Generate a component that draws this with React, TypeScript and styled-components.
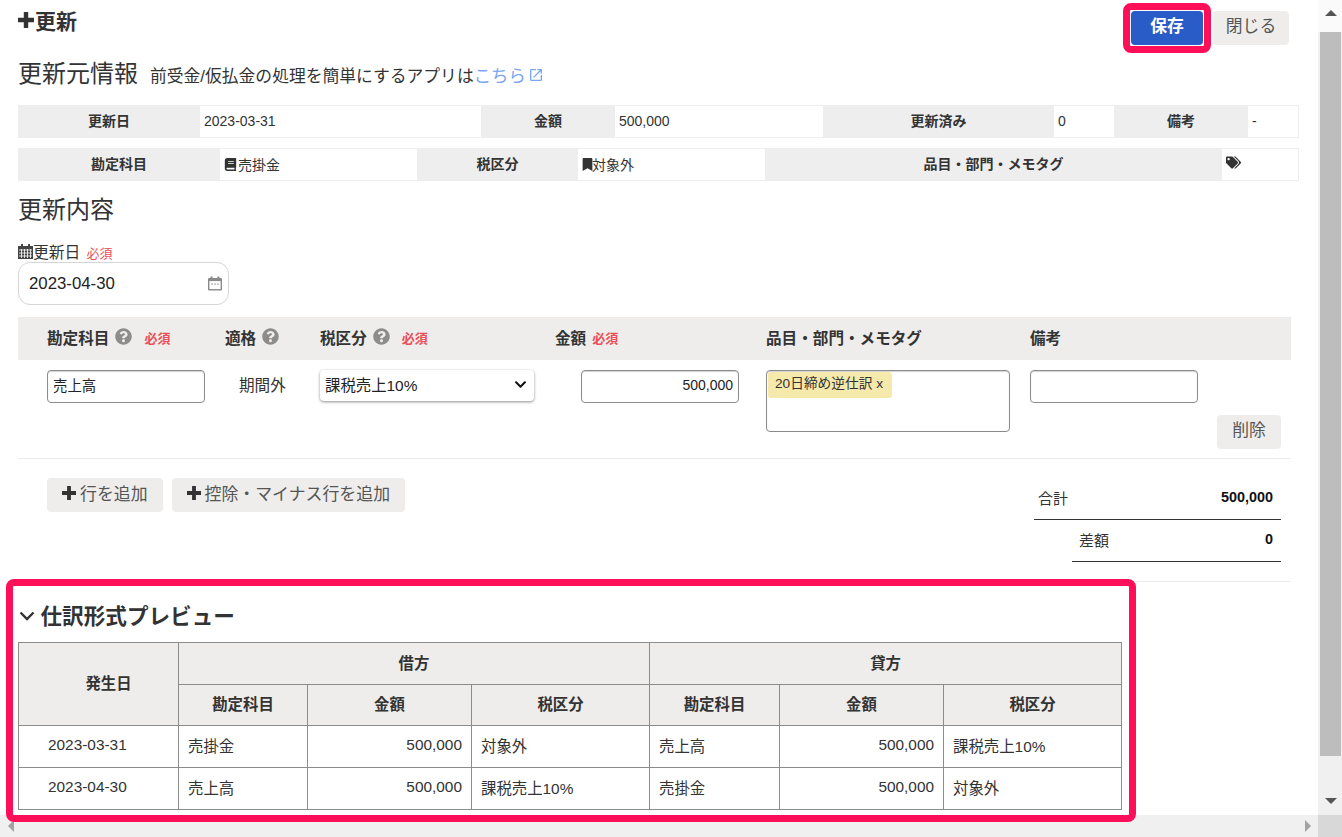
import * as React from "react";
import styled, { createGlobalStyle } from "styled-components";
import {
  FaBook,
  FaBookmark,
  FaChevronDown,
  FaQuestionCircle,
  FaTags,
} from "react-icons/fa";
import { MdOpenInNew } from "react-icons/md";

const GlobalStyle = createGlobalStyle`
  html, body {
    margin: 0;
    padding: 0;
    overflow: hidden;
  }
  * {
    box-sizing: border-box;
  }
  body {
    font-family: "Liberation Sans", "Noto Sans CJK JP", sans-serif;
    color: #333;
    background: #fff;
  }
`;

const pink = "#ff0f5a";
const border = "#8c8c8c";

const infoTop = [
  { label: "更新日", value: "2023-03-31" },
  { label: "金額", value: "500,000" },
  { label: "更新済み", value: "0" },
  { label: "備考", value: "-" },
];

const previewRows = [
  ["2023-03-31", "売掛金", "500,000", "対象外", "売上高", "500,000", "課税売上10%"],
  ["2023-04-30", "売上高", "500,000", "課税売上10%", "売掛金", "500,000", "対象外"],
];

const PlusIcon: React.FC<{ size: number }> = ({ size }) => (
  <PlusSvg viewBox="0 0 16 16" width={size} height={size}>
    <path d="M5.8 0h4.4v5.8H16v4.4h-5.8V16H5.8v-5.8H0V5.8h5.8z" fill="currentColor" />
  </PlusSvg>
);

const App: React.FC = () => {
  return (
    <>
      <GlobalStyle />
      <Screen>
        <Page>
          <Main>
            <TopBar>
              <Title>
                <PlusIcon size={16} />
                更新
              </Title>
              <TopActions>
                <SaveButton>保存</SaveButton>
                <GreyButton>閉じる</GreyButton>
              </TopActions>
            </TopBar>

            <SourceHeading>
              <SectionTitle>更新元情報</SectionTitle>
              <Promo>
                前受金/仮払金の処理を簡単にするアプリは
                <PromoLink>
                  こちら
                  <MdOpenInNew size={16} />
                </PromoLink>
              </Promo>
            </SourceHeading>

            <InfoTable>
              <colgroup>
                <col width={181} />
                <col width={282} />
                <col width={133} />
                <col width={209} />
                <col width={230} />
                <col width={61} />
                <col width={133} />
                <col width={51} />
              </colgroup>
              <tbody>
                <tr>
                  {infoTop.map((item) => (
                    <React.Fragment key={item.label}>
                      <InfoLabel>{item.label}</InfoLabel>
                      <InfoValue>{item.value}</InfoValue>
                    </React.Fragment>
                  ))}
                </tr>
              </tbody>
            </InfoTable>

            <InfoTable>
              <colgroup>
                <col width={201} />
                <col width={198} />
                <col width={160} />
                <col width={188} />
                <col width={456} />
                <col width={77} />
              </colgroup>
              <tbody>
                <tr>
                  <InfoLabel>勘定科目</InfoLabel>
                  <InfoValue>
                    <BookIcon />
                    売掛金
                  </InfoValue>
                  <InfoLabel>税区分</InfoLabel>
                  <InfoValue>
                    <BookmarkIcon />
                    対象外
                  </InfoValue>
                  <InfoLabel>品目・部門・メモタグ</InfoLabel>
                  <InfoValue>
                    <FaTags size={15} />
                  </InfoValue>
                </tr>
              </tbody>
            </InfoTable>

            <ContentHeading>更新内容</ContentHeading>

            <DateLabel>
              <CalendarSvg viewBox="0 0 15 15" width="15" height="15">
                <path d="M3 0h2v2h5V0h2v2h3v13H0V2h3z" fill="#444" />
                <path
                  d="M1 6h13M1 9h13M1 12h13M3.5 5v9M6.5 5v9M9.5 5v9M12.5 5v9"
                  stroke="#fff"
                  strokeWidth="0.8"
                  fill="none"
                />
              </CalendarSvg>
              更新日
              <Required>必須</Required>
            </DateLabel>
            <DateField>
              2023-04-30
              <DateFieldIcon viewBox="0 0 16 16" width="16" height="17">
                <path
                  d="M3.5 1h2v1.5h5V1h2v1.5H14a1 1 0 0 1 1 1V14a1 1 0 0 1-1 1H2a1 1 0 0 1-1-1V3.5a1 1 0 0 1 1-1h1.5z"
                  fill="#8a8a8a"
                />
                <rect x="2.4" y="5.6" width="11.2" height="8" fill="#fff" />
                <rect x="4.4" y="8" width="1.4" height="1.2" fill="#8a8a8a" />
                <rect x="7.3" y="8" width="1.4" height="1.2" fill="#8a8a8a" />
                <rect x="10.2" y="8" width="1.4" height="1.2" fill="#8a8a8a" />
              </DateFieldIcon>
            </DateField>

            <LineHeader>
              <HeaderCell>
                勘定科目
                <HelpIcon />
                <HeaderRequired>必須</HeaderRequired>
              </HeaderCell>
              <HeaderCell>
                適格
                <HelpIcon />
              </HeaderCell>
              <HeaderCell>
                税区分
                <HelpIcon />
                <HeaderRequired>必須</HeaderRequired>
              </HeaderCell>
              <HeaderCell>
                金額
                <AmountRequired>必須</AmountRequired>
              </HeaderCell>
              <HeaderCell>品目・部門・メモタグ</HeaderCell>
              <HeaderCell>備考</HeaderCell>
            </LineHeader>

            <LineRow>
              <AccountCell>
                <TextBox $width={158}>売上高</TextBox>
              </AccountCell>
              <Qualified>期間外</Qualified>
              <SelectBox>
                課税売上10%
                <FaChevronDown size={13} color="#111" />
              </SelectBox>
              <AmountCell>
                <TextBox $width={158} $right>
                  500,000
                </TextBox>
              </AmountCell>
              <TagBox>
                <Tag>20日締め逆仕訳 x</Tag>
              </TagBox>
              <MemoCell>
                <TextBox $width={168} />
                <DeleteButton>削除</DeleteButton>
              </MemoCell>
            </LineRow>

            <FooterRow>
              <AddButtons>
                <AddButton>
                  <PlusIcon size={14} />
                  行を追加
                </AddButton>
                <AddButton>
                  <PlusIcon size={14} />
                  控除・マイナス行を追加
                </AddButton>
              </AddButtons>
              <Totals>
                <TotalRow>
                  <span>合計</span>
                  <TotalValue>500,000</TotalValue>
                </TotalRow>
                <TotalRow $short>
                  <span>差額</span>
                  <TotalValue>0</TotalValue>
                </TotalRow>
              </Totals>
            </FooterRow>

            <PreviewHeading>
              <ChevronSvg viewBox="0 0 16 10" width="16" height="10">
                <polyline points="1.5,1.5 8,8 14.5,1.5" fill="none" stroke="currentColor" strokeWidth="2.4" />
              </ChevronSvg>
              仕訳形式プレビュー
            </PreviewHeading>

            <PreviewTable>
              <colgroup>
                <col width={160} />
                <col width={129} />
                <col width={164} />
                <col width={178} />
                <col width={130} />
                <col width={164} />
                <col width={178} />
              </colgroup>
              <thead>
                <tr>
                  <DateHead rowSpan={2}>発生日</DateHead>
                  <PreviewHead colSpan={3}>借方</PreviewHead>
                  <PreviewHead colSpan={3}>貸方</PreviewHead>
                </tr>
                <tr>
                  <PreviewHead>勘定科目</PreviewHead>
                  <PreviewHead>金額</PreviewHead>
                  <PreviewHead>税区分</PreviewHead>
                  <PreviewHead>勘定科目</PreviewHead>
                  <PreviewHead>金額</PreviewHead>
                  <PreviewHead>税区分</PreviewHead>
                </tr>
              </thead>
              <tbody>
                {previewRows.map((row) => (
                  <tr key={row[0]}>
                    {row.map((cell, i) => (
                      <PreviewCell key={i} $kind={i === 0 ? "date" : i === 2 || i === 5 ? "num" : "text"}>
                        {cell}
                      </PreviewCell>
                    ))}
                  </tr>
                ))}
              </tbody>
            </PreviewTable>
          </Main>

          <HorizontalBar>
            <ArrowLeft />
            <ArrowRight />
          </HorizontalBar>
        </Page>

        <VerticalBar>
          <ArrowButton>
            <ArrowUp />
          </ArrowButton>
          <Thumb />
          <ArrowSpacer>
            <ArrowDown />
          </ArrowSpacer>
          <Corner />
        </VerticalBar>

        <SaveHighlight />
        <PreviewHighlight />
      </Screen>
    </>
  );
};

export default App;

const Screen = styled.div`
  position: relative;
  display: flex;
  width: 1342px;
  height: 837px;
  overflow: hidden;
`;

const Page = styled.div`
  display: flex;
  flex-direction: column;
  width: 1318px;
  height: 837px;
`;

const Main = styled.main`
  flex: 1;
  min-height: 0;
  padding-left: 18px;
  overflow: hidden;
`;

const PlusSvg = styled.svg`
  flex: none;
  color: #333;
`;

const ChevronSvg = styled.svg`
  flex: none;
  margin: 4px 0 0 0.5px;
`;

const CalendarSvg = styled.svg`
  flex: none;
`;

const BookIcon = styled(FaBook)`
  width: 13px;
  height: 13px;
  margin-right: 1px;
`;

const BookmarkIcon = styled(FaBookmark)`
  width: 13px;
  height: 13px;
  margin: 0 -2px 0 -1px;
`;

const TopBar = styled.div`
  display: flex;
  justify-content: space-between;
  align-items: flex-start;
  width: 1271px;
  padding-top: 11px;
`;

const Title = styled.h1`
  display: flex;
  align-items: center;
  gap: 1px;
  margin: 0;
  height: 22px;
  padding-bottom: 4px;
  font-size: 21px;
  font-weight: 700;
  color: #333;
`;

const TopActions = styled.div`
  display: flex;
  gap: 10px;
`;

const BaseButton = styled.button`
  display: inline-flex;
  justify-content: center;
  align-items: center;
  height: 34px;
  padding: 0 0 6px;
  border: none;
  border-radius: 4px;
  font-family: inherit;
  font-size: 16.8px;
  color: #555;
`;

const SaveButton = styled(BaseButton)`
  width: 72px;
  background: #2a5cc8;
  color: #fff;
  font-weight: 700;
`;

const GreyButton = styled(BaseButton)`
  width: 76px;
  background: #eeedeb;
`;

const SourceHeading = styled.div`
  display: flex;
  align-items: center;
  gap: 12px;
  height: 28px;
  margin-top: 15px;
  margin-bottom: 17px;
`;

const SectionTitle = styled.h2`
  margin: 0;
  font-size: 24px;
  font-weight: 400;
  line-height: 28px;
  color: #333;
`;

const Promo = styled.span`
  font-size: 16.8px;
`;

const PromoLink = styled.a`
  display: inline-flex;
  align-items: center;
  gap: 2px;
  color: #7aa6f2;
  font-size: 17.4px;

  svg {
    margin-top: 2px;
  }
`;

const InfoTable = styled.table`
  width: 1280px;
  height: 33px;
  margin-bottom: 10px;
  border-collapse: collapse;
  table-layout: fixed;
  font-size: 14px;
`;

const InfoLabel = styled.th`
  height: 32px;
  padding: 0 0 3px;
  background: #eeeeee;
  border: 1px solid #eeeeee;
  font-weight: 700;
  color: #333;
`;

const InfoValue = styled.td`
  padding: 0 4px 2px;
  border: 1px solid #eeeeee;
  color: #333;

  svg {
    vertical-align: -1px;
  }
`;

const ContentHeading = styled(SectionTitle)`
  margin-top: 15px;
  margin-bottom: 18px;
`;

const DateLabel = styled.div`
  display: flex;
  align-items: center;
  height: 18px;
  font-size: 15.8px;
`;

const Required = styled.span`
  margin-left: 6px;
  margin-top: 2px;
  color: #e8505b;
  font-size: 13px;
`;

const DateField = styled.div`
  display: flex;
  justify-content: space-between;
  align-items: center;
  width: 211px;
  height: 43px;
  margin-top: 2px;
  padding: 0 5px 0 10px;
  background: #fff;
  border: 1px solid #d5d5d5;
  border-radius: 12px;
  font-size: 16.8px;
  color: #222;
`;

const DateFieldIcon = styled.svg`
  flex: none;
`;

const lineColumns = "207px 95px 235px 211px 264px 261px";

const LineHeader = styled.div`
  display: grid;
  grid-template-columns: ${lineColumns};
  align-items: center;
  width: 1273px;
  height: 43px;
  margin-top: 12px;
  padding-bottom: 4px;
  background: #eeedeb;
`;

const HeaderCell = styled.div`
  display: flex;
  align-items: center;
  font-size: 15.6px;
  font-weight: 700;
  color: #333;

  &:first-child {
    padding-left: 29px;
  }
`;

const HelpIcon = styled(FaQuestionCircle)`
  width: 17px;
  height: 17px;
  margin-left: 6px;
  color: #8c8c8c;
`;

const HeaderRequired = styled(Required)`
  margin-left: 12px;
  font-weight: 700;
`;

const AmountRequired = styled(Required)`
  margin-left: 6px;
  font-weight: 700;
`;

const LineRow = styled.div`
  display: grid;
  grid-template-columns: ${lineColumns};
  align-items: start;
  width: 1273px;
  height: 99px;
  padding-top: 10px;
  border-bottom: 1px solid #ebebeb;
`;

const AccountCell = styled.div`
  padding-left: 29px;
`;

const TextBox = styled.div<{ $width: number; $right?: boolean }>`
  display: flex;
  align-items: center;
  justify-content: ${(p) => (p.$right ? "flex-end" : "flex-start")};
  width: ${(p) => p.$width}px;
  height: 33px;
  padding: 0 5px 4px;
  background: #fff;
  border: 1px solid #8c8c8c;
  border-radius: 4px;
  box-shadow: inset 0 1px 1px rgba(0, 0, 0, 0.18);
  font-size: ${(p) => (p.$right ? "14px" : "14.4px")};
  color: #222;
`;

const Qualified = styled.div`
  padding: 3px 0 0 14px;
  font-size: 15.6px;
  color: #333;
`;

const SelectBox = styled.div`
  display: flex;
  justify-content: space-between;
  align-items: center;
  width: 214px;
  height: 31px;
  padding: 0 7px 3px 5px;
  background: #fff;
  border-radius: 4px;
  box-shadow: 0 1px 3px rgba(0, 0, 0, 0.45);
  font-size: 15.4px;
  color: #222;
`;

const AmountCell = styled.div`
  padding-left: 26px;
`;

const TagBox = styled.div`
  width: 244px;
  height: 62px;
  padding: 1px;
  background: #fff;
  border: 1px solid #8c8c8c;
  border-radius: 4px;
  box-shadow: inset 0 1px 1px rgba(0, 0, 0, 0.18);
`;

const Tag = styled.span`
  display: inline-block;
  height: 26px;
  padding: 0 9px 0 7px;
  background: #f5e9ab;
  border-radius: 3px;
  font-size: 13.7px;
  line-height: 23px;
  color: #333;
`;

const MemoCell = styled.div`
  display: flex;
  flex-direction: column;
  align-items: flex-start;
`;

const DeleteButton = styled(BaseButton)`
  align-self: flex-end;
  width: 64px;
  margin-top: 12px;
  margin-right: 10px;
  background: #eeedeb;
`;

const FooterRow = styled.div`
  display: flex;
  justify-content: space-between;
  align-items: flex-start;
  width: 1273px;
  padding: 19px 10px 19px 29px;
  border-bottom: 1px solid #ebebeb;
`;

const AddButtons = styled.div`
  display: flex;
  gap: 9px;
`;

const AddButton = styled(BaseButton)`
  gap: 4px;
  padding: 0 15px 6px;
  background: #eeedeb;
  font-size: 16.9px;

  svg {
    margin-top: 2px;
  }
`;

const Totals = styled.div`
  display: flex;
  flex-direction: column;
  align-items: flex-end;
  width: 247px;
`;

const TotalRow = styled.div<{ $short?: boolean }>`
  display: flex;
  justify-content: space-between;
  align-items: center;
  width: ${(p) => (p.$short ? "209px" : "247px")};
  height: 42px;
  padding: 0 8px 3px ${(p) => (p.$short ? "7px" : "4px")};
  border-bottom: 1px solid #333;
  font-size: 15px;
  color: #333;
`;

const TotalValue = styled.span`
  font-size: 14.4px;
  font-weight: 700;
  color: #111;
`;

const PreviewHeading = styled.h3`
  display: flex;
  align-items: center;
  gap: 6px;
  height: 28px;
  margin: 20px 0 12px;
  padding-bottom: 4px;
  font-size: 21.6px;
  font-weight: 700;
  color: #333;
`;

const PreviewTable = styled.table`
  width: 1103px;
  border-collapse: collapse;
  table-layout: fixed;
  font-size: 15.4px;

  thead tr:nth-child(2) th {
    height: 41px;
  }
`;

const PreviewHead = styled.th`
  height: 42px;
  padding: 0 0 4px;
  background: #eeedeb;
  border: 1px solid ${border};
  font-weight: 700;
  color: #333;
`;

const DateHead = styled(PreviewHead)`
  padding-left: 20px;
`;

const PreviewCell = styled.td<{ $kind: "date" | "num" | "text" }>`
  height: 42px;
  padding: ${(p) => (p.$kind === "date" ? "0 0 3px 29px" : "0 9px 3px")};
  border: 1px solid ${border};
  text-align: ${(p) => (p.$kind === "num" ? "right" : "left")};
  color: #333;
`;

const HorizontalBar = styled.div`
  display: flex;
  justify-content: space-between;
  align-items: center;
  flex: none;
  height: 22px;
  padding: 0 7px 0 8px;
  background: #f0f0f0;
`;

const VerticalBar = styled.div`
  display: flex;
  flex-direction: column;
  flex: none;
  width: 24px;
  height: 837px;
  background: #f0f0f0;
`;

const ArrowButton = styled.div`
  display: flex;
  justify-content: center;
  align-items: center;
  flex: none;
  height: 32px;
  padding: 0 0 6px 2px;
  background: #fafafa;
`;

const Thumb = styled.div`
  flex: none;
  width: 21px;
  height: 724px;
  margin-left: 2px;
  background: #bdbdbd;
`;

const ArrowSpacer = styled.div`
  display: flex;
  justify-content: center;
  align-items: flex-end;
  flex: 1;
  padding: 0 0 11px 1px;
`;

const Corner = styled.div`
  flex: none;
  height: 22px;
  background: #d8d8d8;
`;

const ArrowUp = styled.div`
  width: 0;
  height: 0;
  border-left: 6px solid transparent;
  border-right: 6px solid transparent;
  border-bottom: 6px solid #555;
`;

const ArrowDown = styled.div`
  width: 0;
  height: 0;
  border-left: 6px solid transparent;
  border-right: 6px solid transparent;
  border-top: 6px solid #555;
`;

const ArrowLeft = styled.div`
  width: 0;
  height: 0;
  border-top: 6px solid transparent;
  border-bottom: 6px solid transparent;
  border-right: 6px solid #a3a3a3;
`;

const ArrowRight = styled.div`
  width: 0;
  height: 0;
  border-top: 6px solid transparent;
  border-bottom: 6px solid transparent;
  border-left: 6px solid #a3a3a3;
`;

// annotation frames drawn on top of the screenshot
const SaveHighlight = styled.div`
  position: absolute;
  left: 1123px;
  top: 3px;
  width: 88px;
  height: 50px;
  border: 7px solid ${pink};
  border-radius: 8px;
  pointer-events: none;
`;

const PreviewHighlight = styled.div`
  position: absolute;
  left: 6px;
  top: 579px;
  width: 1130px;
  height: 243px;
  border: 7px solid ${pink};
  border-radius: 8px;
  pointer-events: none;
`;
